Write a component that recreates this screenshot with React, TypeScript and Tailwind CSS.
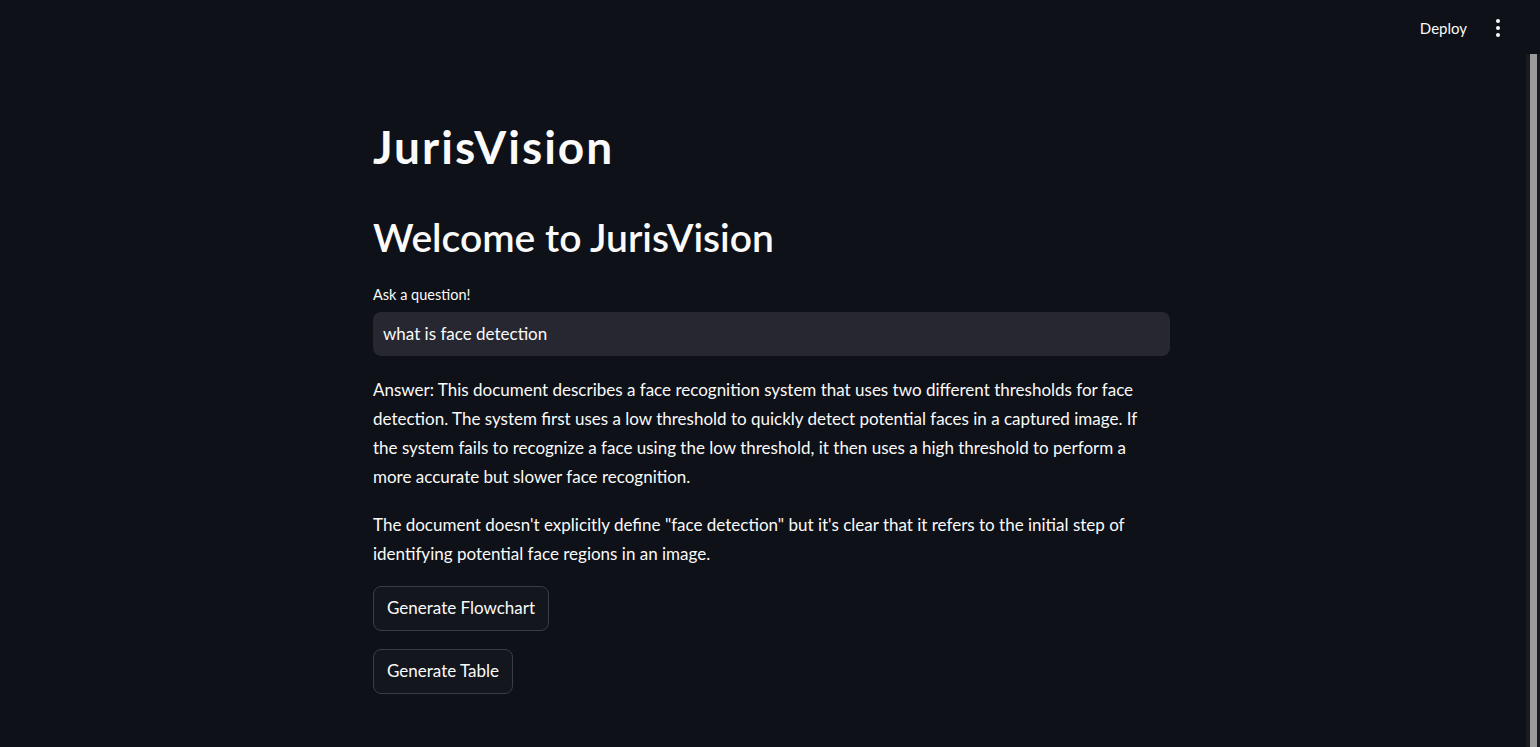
const font = { fontFamily: '"Source Sans Pro", Lato, "Noto Sans", sans-serif' };

const Header = () => (
  <header className="flex h-[56px] items-center justify-end gap-[21px] pr-[18px]">
    <button className="text-[15px] text-[#fafafa]">Deploy</button>
    <button className="flex h-[20px] w-[20px] flex-col items-center justify-center gap-[3px]">
      <span className="h-[4px] w-[4px] rounded-full bg-[#fafafa]" />
      <span className="h-[4px] w-[4px] rounded-full bg-[#fafafa]" />
      <span className="h-[4px] w-[4px] rounded-full bg-[#fafafa]" />
    </button>
  </header>
);

const App = () => {
  return (
    <div style={font} className="flex h-[747px] w-full overflow-hidden bg-[#0e1117] text-[#fafafa]">
      <div className="flex-1">
        <Header />
        <main className="ml-[373px] w-[797px] pt-[63px]">
          <h1 className="text-[46px] font-bold leading-[1.2] tracking-[2px]">JurisVision</h1>
          <h2 className="mt-[40px] text-[39px] font-semibold leading-[1.2]">Welcome to JurisVision</h2>
          <label className="mt-[23px] block text-[14.5px]">Ask a question!</label>
          <div className="mt-[6px] flex h-[44px] items-center rounded-[8px] bg-[#262730] px-[10px] text-[17px]">
            what is face detection
          </div>
          <div className="mt-[19px] space-y-[19px] text-[17px] leading-[29px]">
            <p>
              Answer: This document describes a face recognition system that uses two different thresholds for face
              <br />
              detection. The system first uses a low threshold to quickly detect potential faces in a captured image. If
              <br />
              the system fails to recognize a face using the low threshold, it then uses a high threshold to perform a
              <br />
              more accurate but slower face recognition.
            </p>
            <p>
              The document doesn't explicitly define "face detection" but it's clear that it refers to the initial step of
              <br />
              identifying potential face regions in an image.
            </p>
          </div>
          <div className="mt-[18px] flex flex-col items-start gap-[18px]">
            <button className="h-[45px] rounded-[8px] border border-[#3a3d44] bg-[#13161d] px-[13px] text-[17px]">
              Generate Flowchart
            </button>
            <button className="h-[45px] rounded-[8px] border border-[#3a3d44] bg-[#13161d] px-[13px] text-[17px]">
              Generate Table
            </button>
          </div>
        </main>
      </div>
      <div className="flex w-[14px] flex-col pt-[54px]">
        <div className="flex flex-1">
          <div className="w-[4px] bg-[#1a1b1f]" />
          <div className="w-[7px] bg-[#9b9b9b]" />
          <div className="w-[3px] bg-[#1a1b1f]" />
        </div>
      </div>
    </div>
  );
};

export default App;
